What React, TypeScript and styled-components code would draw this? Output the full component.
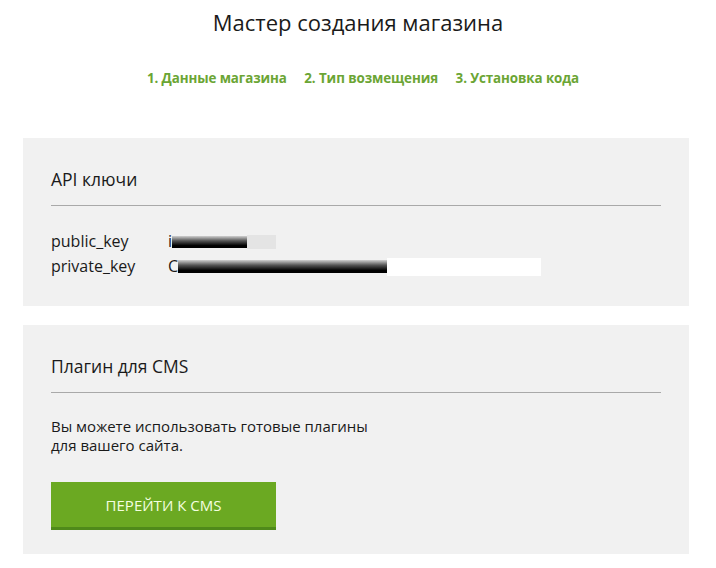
import styled, { createGlobalStyle } from 'styled-components';

const Global = createGlobalStyle`
  body {
    margin: 0;
    background: #fff;
    font-family: "Open Sans", "Noto Sans", sans-serif;
    color: #1a1a1a;
  }
`;

const Page = styled.div`
  width: 716px;
  padding: 8px 0 14px;
`;

const Title = styled.h1`
  margin: 0;
  text-align: center;
  font-weight: 400;
  font-size: 22px;
  line-height: 28px;
`;

const Steps = styled.ul`
  display: flex;
  justify-content: center;
  gap: 17.5px;
  list-style: none;
  margin: 32px 0 0 10px;
  padding: 0;
  font-size: 13.4px;
  font-weight: 700;
  letter-spacing: -0.1px;
  color: #6ba534;
  line-height: 20px;
`;

const Panel = styled.section`
  margin: ${p => p.$top}px 27px 0 23px;
  background: #f1f1f1;
  padding: 28px 28px ${p => p.$bottom}px;
`;

const PanelTitle = styled.h2`
  margin: 0;
  font-size: 17.5px;
  font-weight: 400;
  line-height: 26px;
  padding-bottom: 13px;
  border-bottom: 1px solid #a9a9a9;
`;

const KeyTable = styled.div`
  display: grid;
  grid-template-columns: 117px 1fr;
  margin-top: 23px;
  font-size: 16px;
  line-height: 25px;
`;

const KeyValue = styled.div`
  display: flex;
  align-items: center;
`;

const Redacted = styled.span`
  display: inline-block;
  width: ${p => p.$w}px;
  height: ${p => p.$h}px;
  background: ${p => p.$bg};
`;

const Text = styled.p`
  margin: 24px 0 0;
  font-size: 15px;
  line-height: 19px;
`;

const Button = styled.button`
  display: block;
  margin-top: 27px;
  width: 225px;
  height: 48px;
  border: 0;
  border-bottom: 3px solid #4f8a1a;
  background: #6ba922;
  color: #f4ffe0;
  font-family: inherit;
  font-size: 15px;
  cursor: pointer;
`;

const dark = 'linear-gradient(180deg, #d0d0d0 0%, #555 40%, #000 80%, #000 100%)';

const App = () => (
  <Page>
    <Global />
    <Title>Мастер создания магазина</Title>
    <Steps>
      <li>1. Данные магазина</li>
      <li>2. Тип возмещения</li>
      <li>3. Установка кода</li>
    </Steps>

    <Panel $top={50} $bottom={27}>
      <PanelTitle>API ключи</PanelTitle>
      <KeyTable>
        <span>public_key</span>
        <KeyValue>
          i
          <Redacted $w={75} $h={12} $bg={dark} />
          <Redacted $w={29} $h={14} $bg="#e4e4e4" />
        </KeyValue>
        <span>private_key</span>
        <KeyValue>
          C
          <Redacted $w={209} $h={13} $bg={dark} />
          <Redacted $w={154} $h={18} $bg="#fff" />
        </KeyValue>
      </KeyTable>
    </Panel>

    <Panel $top={19} $bottom={24}>
      <PanelTitle>Плагин для CMS</PanelTitle>
      <Text>
        Вы можете использовать готовые плагины
        <br />
        для вашего сайта.
      </Text>
      <Button>ПЕРЕЙТИ К CMS</Button>
    </Panel>
  </Page>
);

export default App;
